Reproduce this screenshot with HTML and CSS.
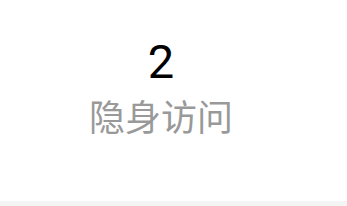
FILE: index.html
```html
<!DOCTYPE html>
<html lang="zh-CN">
<head>
    <meta charset="UTF-8">
    <meta name="viewport" content="width=device-width, initial-scale=1.0">
    <title>隐身访问</title>
    <link rel="stylesheet" href="styles.css">
</head>
<body>
    <div class="page">
        <div class="stat-cell">
            <div class="stat-num">2</div>
            <div class="stat-label">隐身访问</div>
        </div>
    </div>
    <div class="footer-bar"></div>
</body>
</html>
```
FILE: styles.css
```css
body {
    margin: 0;
    padding: 0;
    background-color: #fff;
    font-family: Roboto, "Noto Sans CJK SC", sans-serif;
    width: 347px;
    height: 206px;
    overflow: hidden;
    display: flex;
    flex-direction: column;
}

.page {
    flex: 1;
}

.stat-cell {
    width: 322px;
    padding-top: 36px;
    display: flex;
    flex-direction: column;
    align-items: center;
}

.stat-num {
    font-size: 47px;
    line-height: 52px;
    color: #000;
}

.stat-label {
    margin-top: 5px;
    font-family: "Noto Sans CJK SC", sans-serif;
    font-size: 36px;
    line-height: 44px;
    color: #999;
}

.footer-bar {
    height: 5px;
    background-color: #f4f4f4;
}
```
